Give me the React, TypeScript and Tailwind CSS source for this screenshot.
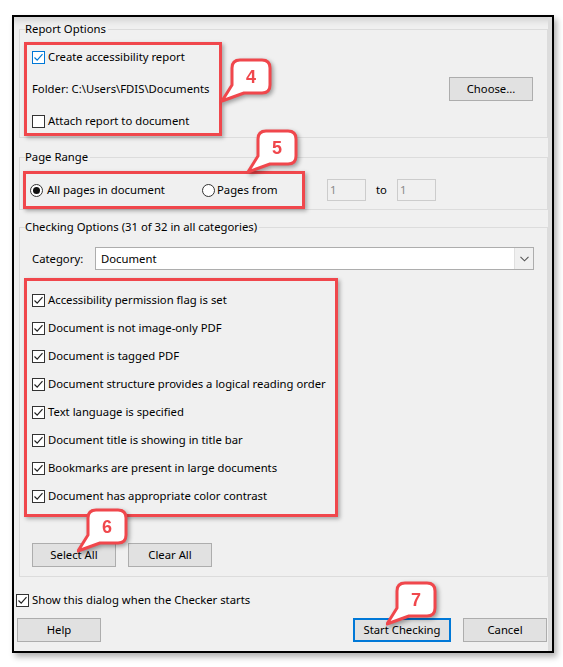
import React from "react";

const RED = "border-[#f0474c]";

const Check = ({ checked, blue }: { checked: boolean; blue?: boolean }) => (
	<span
		className={`inline-flex w-[13px] h-[13px] shrink-0 items-center justify-center bg-white border ${
			blue ? "border-[#0078d7]" : "border-[#333333]"
		}`}
	>
		{checked && (
			<svg width="11" height="11" viewBox="0 0 11 11">
				<path
					d="M1.5 5.5 L4.2 8.2 L9.5 2.2"
					fill="none"
					stroke={blue ? "#0078d7" : "#222222"}
					strokeWidth="1.2"
				/>
			</svg>
		)}
	</span>
);

const Radio = ({ checked }: { checked: boolean }) => (
	<span className="inline-flex w-[13px] h-[13px] shrink-0 items-center justify-center rounded-full bg-white border border-[#333333]">
		{checked && <span className="w-[7px] h-[7px] rounded-full bg-[#111111]" />}
	</span>
);

const Button = ({ label, focused }: { label: string; focused?: boolean }) => (
	<button
		className={`h-[24px] bg-[#e1e1e1] text-black ${
			focused ? "border-2 border-[#0078d7] w-[98px]" : "w-[84px] border border-[#adadad]"
		}`}
	>
		{label}
	</button>
);

const Callout = ({ n, x, y }: { n: string; x: number; y: number }) => (
	<svg
		className="absolute drop-shadow-[2px_2px_2px_rgba(0,0,0,0.35)]"
		style={{ left: x, top: y }}
		width="54"
		height="46"
		viewBox="0 0 54 46"
	>
		<path
			d="M19 2 H41 Q49 2 49 10 V27 Q49 35 41 35 H23 L1 43 L11 27 V10 Q11 2 19 2 Z"
			fill="white"
			stroke="#f0474c"
			strokeWidth="3"
			strokeLinejoin="round"
		/>
		<text
			x="30"
			y="25"
			textAnchor="middle"
			fontFamily="Liberation Sans, Arial, sans-serif"
			fontSize="18"
			fontWeight="bold"
			fill="#f0474c"
		>
			{n}
		</text>
	</svg>
);

const checks = [
	"Accessibility permission flag is set",
	"Document is not image-only PDF",
	"Document is tagged PDF",
	"Document structure provides a logical reading order",
	"Text language is specified",
	"Document title is showing in title bar",
	"Bookmarks are present in large documents",
	"Document has appropriate color contrast",
];

export default function App() {
	return (
		<div className="relative w-[563px] h-[667px] bg-white font-['Segoe_UI','Noto_Sans',sans-serif] text-[11.3px] text-black leading-[16px] whitespace-nowrap">
			<div className="absolute left-[12px] top-[15px] w-[542px] h-[638px] border-2 border-black bg-[#f0f0f0] shadow-[3px_4px_6px_rgba(0,0,0,0.3)]">
				<div className="h-full flex flex-col pl-[5px] pr-[4px] shadow-[inset_-4px_0_0_#dcdcdc,inset_0_10px_6px_-6px_#d4d4d4]">
					{/* Report Options */}
					<fieldset className="mt-[4px] border border-[#dcdcdc] pb-[1px]">
						<legend className="ml-[5px] pr-[2px]">Report Options</legend>
						<div className="flex items-center pt-[5px] pr-[14px]">
							<div className={`ml-[4px] w-[198px] border-[3px] ${RED} pl-[5px] flex flex-col gap-[8px] shadow-[2px_2px_4px_rgba(0,0,0,0.3)]`}>
								<label className="h-[24px] flex items-center gap-[3px]">
									<Check checked blue />
									<span>Create accessibility report</span>
								</label>
								<div className="h-[24px] flex items-center">Folder: C:\Users\FDIS\Documents</div>
								<label className="h-[24px] flex items-center gap-[3px]">
									<Check checked={false} />
									<span>Attach report to document</span>
								</label>
							</div>
							<div className="ml-auto">
								<Button label="Choose..." />
							</div>
						</div>
					</fieldset>

					{/* Page Range */}
					<fieldset className="mt-[11px] border border-[#dcdcdc]">
						<legend className="ml-[5px] pr-[2px]">Page Range</legend>
						<div className="flex items-center pt-[6px]">
							<div className={`ml-[3px] w-[282px] h-[38px] border-[3px] ${RED} pl-[4px] flex items-center shadow-[2px_2px_4px_rgba(0,0,0,0.3)]`}>
								<label className="w-[172px] flex items-center gap-[4px]">
									<Radio checked />
									<span>All pages in document</span>
								</label>
								<label className="flex items-center gap-[2px]">
									<Radio checked={false} />
									<span>Pages from</span>
								</label>
							</div>
							<div className="ml-[22px] w-[39px] h-[22px] border border-[#cccccc] pl-[2px] text-[#8a8a8a] flex items-center">1</div>
							<span className="ml-[10px] w-[21px]">to</span>
							<div className="w-[39px] h-[22px] border border-[#cccccc] pl-[2px] text-[#8a8a8a] flex items-center">1</div>
						</div>
					</fieldset>

					{/* Checking Options */}
					<fieldset className="mt-[9px] border border-[#dcdcdc] pb-[9px]">
						<legend className="ml-[5px] pr-[2px]">Checking Options (31 of 32 in all categories)</legend>
						<div className="flex items-center pt-[12px] pl-[12px] pr-[13px]">
							<span className="w-[63px]">Category:</span>
							<div className="flex-1 h-[23px] flex border border-[#adadad] bg-white">
								<span className="flex-1 pl-[5px] flex items-center">Document</span>
								<span className="w-[19px] bg-[#f0f0f0] border-l border-[#e0e0e0] flex items-center justify-center">
									<svg width="9" height="6" viewBox="0 0 9 6">
										<path d="M0.5 0.8 L4.5 4.8 L8.5 0.8" fill="none" stroke="#555555" strokeWidth="1.1" />
									</svg>
								</span>
							</div>
						</div>
						<div className={`mt-[8px] ml-[4px] w-[314px] border-[3px] ${RED} pl-[5px] pt-[5px] pb-[4px] shadow-[2px_2px_4px_rgba(0,0,0,0.3)]`}>
							{checks.map((c, i) => (
								<label key={i} className="h-[28px] flex items-center gap-[3px]">
									<Check checked />
									<span>{c}</span>
								</label>
							))}
						</div>
						<div className="mt-[26px] ml-[12px] flex gap-[12px]">
							<Button label="Select All" />
							<Button label="Clear All" />
						</div>
					</fieldset>

					<label className="mt-[15px] flex items-center gap-[3px] -ml-[3px]">
						<Check checked />
						<span>Show this dialog when the Checker starts</span>
					</label>

					<div className="mt-[10px] flex items-center -ml-[2px] pr-[1px]">
						<Button label="Help" />
						<div className="ml-auto flex gap-[12px]">
							<Button label="Start Checking" focused />
							<Button label="Cancel" />
						</div>
					</div>
				</div>
			</div>

			<Callout n="4" x={221} y={58} />
			<Callout n="5" x={247} y={129} />
			<Callout n="6" x={77} y={508} />
			<Callout n="7" x={386} y={581} />
		</div>
	);
}
